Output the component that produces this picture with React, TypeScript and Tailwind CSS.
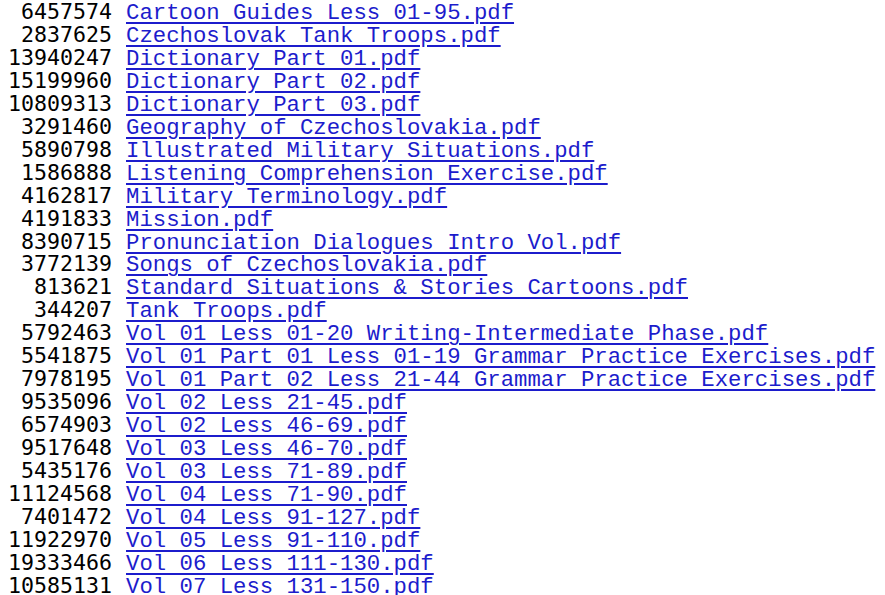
const files: [string, string][] = [
  ['6457574', 'Cartoon Guides Less 01-95.pdf'],
  ['2837625', 'Czechoslovak Tank Troops.pdf'],
  ['13940247', 'Dictionary Part 01.pdf'],
  ['15199960', 'Dictionary Part 02.pdf'],
  ['10809313', 'Dictionary Part 03.pdf'],
  ['3291460', 'Geography of Czechoslovakia.pdf'],
  ['5890798', 'Illustrated Military Situations.pdf'],
  ['1586888', 'Listening Comprehension Exercise.pdf'],
  ['4162817', 'Military Terminology.pdf'],
  ['4191833', 'Mission.pdf'],
  ['8390715', 'Pronunciation Dialogues Intro Vol.pdf'],
  ['3772139', 'Songs of Czechoslovakia.pdf'],
  ['813621', 'Standard Situations & Stories Cartoons.pdf'],
  ['344207', 'Tank Troops.pdf'],
  ['5792463', 'Vol 01 Less 01-20 Writing-Intermediate Phase.pdf'],
  ['5541875', 'Vol 01 Part 01 Less 01-19 Grammar Practice Exercises.pdf'],
  ['7978195', 'Vol 01 Part 02 Less 21-44 Grammar Practice Exercises.pdf'],
  ['9535096', 'Vol 02 Less 21-45.pdf'],
  ['6574903', 'Vol 02 Less 46-69.pdf'],
  ['9517648', 'Vol 03 Less 46-70.pdf'],
  ['5435176', 'Vol 03 Less 71-89.pdf'],
  ['11124568', 'Vol 04 Less 71-90.pdf'],
  ['7401472', 'Vol 04 Less 91-127.pdf'],
  ['11922970', 'Vol 05 Less 91-110.pdf'],
  ['19333466', 'Vol 06 Less 111-130.pdf'],
  ['10585131', 'Vol 07 Less 131-150.pdf'],
];

export default function App() {
  return (
    <div className="min-h-screen bg-white pt-[1px] overflow-hidden">
      {/* file listing: size, then link */}
      <div className="flex flex-col">
        {files.map(([size, name]) => (
          <div key={name} className="flex items-baseline h-[22.96px] leading-[22.96px] whitespace-pre">
            <span
              className="w-[112px] shrink-0 text-right text-black text-[21.6px]"
              style={{ fontFamily: '"DejaVu Sans Mono", monospace' }}
            >
              {size}
            </span>
            <a
              href="#"
              className="ml-[14px] text-[#1c1ccc] underline decoration-[#1c1ccc] underline-offset-[3px] text-[22.3px]"
              style={{ fontFamily: '"Courier New", "Liberation Mono", monospace' }}
            >
              {name}
            </a>
          </div>
        ))}
      </div>
    </div>
  );
}
